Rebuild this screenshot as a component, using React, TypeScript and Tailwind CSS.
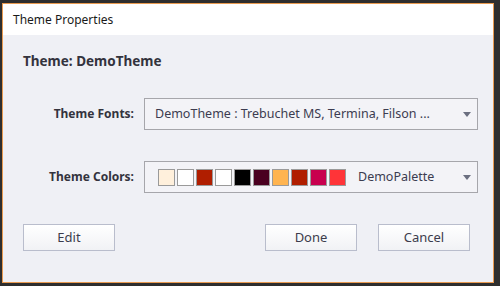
import React from "react";

const swatches = ["#fff0dc", "#ffffff", "#b01e00", "#ffffff", "#000000", "#4a0020", "#ffb450", "#b01e00", "#c8004e", "#ff3438"];

function Arrow() {
  return (
    <svg width="8" height="5" viewBox="0 0 8 5" className="shrink-0">
      <path d="M0 0 H8 L4 5 Z" fill="#6b6f80" />
    </svg>
  );
}

function Btn({ label }: { label: string }) {
  return (
    <button className="w-[92px] h-[27px] border border-[#b9bdcc] bg-gradient-to-b from-white to-[#f1f2f5] text-[13px] text-[#3c3c4c] flex items-center justify-center">
      {label}
    </button>
  );
}

export default function App() {
  return (
    <div className="w-[500px] h-[286px] bg-[#2e2e2e] pt-[3px] pl-[2px] overflow-hidden" style={{ fontFamily: '"Noto Sans", "Open Sans", sans-serif' }}>
      <div className="w-[492px] h-[280px] border border-[#e89a50] bg-[#eff0f5] flex flex-col">
        <div className="h-[31px] bg-white flex items-center pl-[10px] text-[12px] text-[#1a1a1a]">Theme Properties</div>
        <div className="flex flex-col pl-[20px] pr-[15px]">
          <div className="mt-[17px] h-[18px] flex items-center font-bold text-[13.5px] text-[#33333d]">Theme: DemoTheme</div>
          <div className="mt-[28px] flex items-center">
            <div className="w-[111px] text-right font-bold text-[12px] text-[#33333d]">Theme Fonts:</div>
            <div className="ml-[10px] w-[334px] h-[32px] border border-[#a6a6ab] bg-[#f3f3f7] flex items-center pl-[10px] pr-[6px] text-[12.5px] text-[#3c3c50]">
              <span className="flex-1">DemoTheme : Trebuchet MS, Termina, Filson ...</span>
              <Arrow />
            </div>
          </div>
          <div className="mt-[31px] flex items-center">
            <div className="w-[111px] text-right font-bold text-[12px] text-[#33333d]">Theme Colors:</div>
            <div className="ml-[10px] w-[334px] h-[32px] border border-[#a6a6ab] bg-[#f3f3f7] flex items-center pl-[13px] pr-[6px] text-[12.5px] text-[#3c3c50]">
              <div className="flex gap-[2px]">
                {swatches.map((c, i) => (
                  <div key={i} className="w-[17px] h-[17px] border border-[#9a9a9a]" style={{ backgroundColor: c }} />
                ))}
              </div>
              <span className="flex-1 ml-[12px]">DemoPalette</span>
              <Arrow />
            </div>
          </div>
          <div className="mt-[31px] flex items-center">
            <Btn label="Edit" />
            <div className="ml-[150px]"><Btn label="Done" /></div>
            <div className="ml-[21px]"><Btn label="Cancel" /></div>
          </div>
        </div>
      </div>
    </div>
  );
}
